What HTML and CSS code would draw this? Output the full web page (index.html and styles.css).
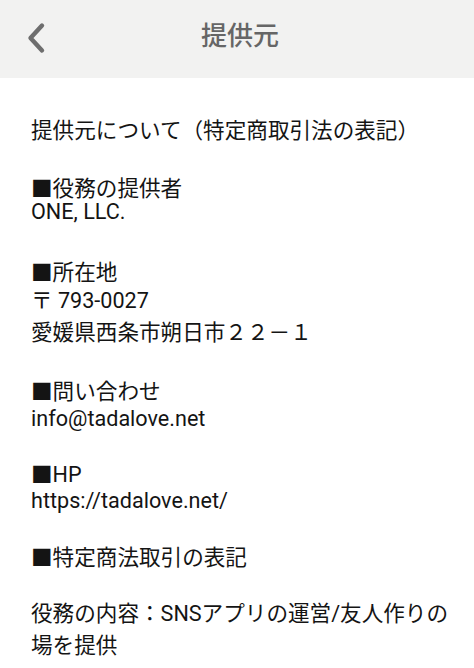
FILE: index.html
```html
<!DOCTYPE html>
<html lang="ja">
<head>
<meta charset="utf-8">
<link rel="stylesheet" href="styles.css">
</head>
<body>
<header class="bar">
  <svg class="back" width="22" height="32" viewBox="0 0 22 32"><path d="M17 3.5 L5.5 16 L17 28.5" fill="none" stroke="#6e6e6e" stroke-width="4.4" stroke-linecap="round" stroke-linejoin="round"/></svg>
  <h1 class="title">提供元</h1>
</header>
<main class="content">
  <p class="grp g1">提供元について（特定商取引法の表記）</p>
  <p class="grp g2">■役務の提供者<br>ONE, LLC.</p>
  <div class="grp g3">
    <div class="l24">■所在地</div>
    <div class="l32">〒 793-0027</div>
    <div class="l32">愛媛県西条市朔日市２２－１</div>
  </div>
  <p class="grp g4">■問い合わせ<br>info@tadalove.net</p>
  <p class="grp g5">■HP<br>https://tadalove.net/</p>
  <p class="grp g6">■特定商法取引の表記</p>
  <p class="grp g7">役務の内容：SNSアプリの運営/友人作りの場を提供</p>
</main>
</body>
</html>
```
FILE: styles.css
```css
html, body {
  margin: 0;
  padding: 0;
  background: #ffffff;
}
body {
  font-family: Roboto, "Noto Sans CJK JP", sans-serif;
  color: #141414;
  width: 474px;
  height: 668px;
  overflow: hidden;
}
.bar {
  position: relative;
  height: 78px;
  background: #f2f2f1;
  display: flex;
  align-items: center;
  justify-content: center;
}
.back {
  position: absolute;
  left: 25px;
  top: 22px;
}
.title {
  margin: 0 0 6px 6px;
  font-size: 26px;
  font-weight: 500;
  color: #666666;
  line-height: 30px;
}
.content {
  padding: 0 20px 0 31px;
  font-size: 21.6px;
}
.grp {
  margin: 0;
}
.g1 { line-height: 32px; margin-top: 37px; }
.g2 { line-height: 23px; margin-top: 29.5px; }
.g3 { margin-top: 38.5px; }
.l24 { line-height: 24px; }
.l32 { line-height: 32px; }
.g4 { line-height: 27px; margin-top: 28.5px; }
.g5 { line-height: 26px; margin-top: 30.5px; }
.g6 { line-height: 28px; margin-top: 30px; }
.g7 { line-height: 32px; margin-top: 26px; }
```
